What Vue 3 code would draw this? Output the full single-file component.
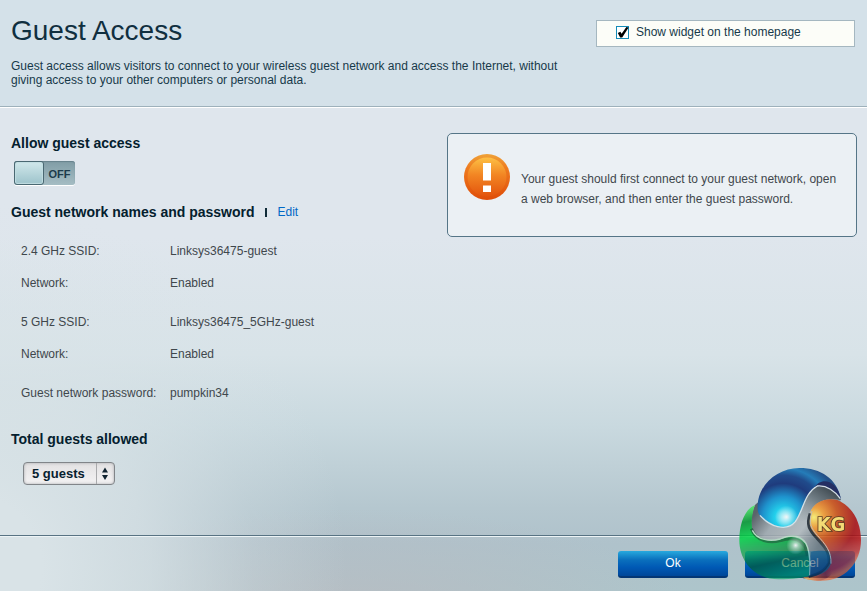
<script setup>
import { ref } from 'vue';

const showWidget = ref(true);
const guestAccess = ref(false);
const guests = ref(5);

const networks = [
  [
    { label: '2.4 GHz SSID:', value: 'Linksys36475-guest' },
    { label: 'Network:', value: 'Enabled' }
  ],
  [
    { label: '5 GHz SSID:', value: 'Linksys36475_5GHz-guest' },
    { label: 'Network:', value: 'Enabled' }
  ],
  [
    { label: 'Guest network password:', value: 'pumpkin34' }
  ]
];
</script>

<template>
  <div class="page">
    <header class="header">
      <div class="intro">
        <h1>Guest Access</h1>
        <p>Guest access allows visitors to connect to your wireless guest network and access the Internet, without giving access to your other computers or personal data.</p>
      </div>
      <label class="widget-box">
        <span class="check">
          <input type="checkbox" v-model="showWidget" />
          <svg v-if="showWidget" viewBox="0 0 13 13"><path d="M1.8 7 4.4 5.8 5.6 7.8 10.4 1 12.6 1.4 6.2 11.4 4.2 11.4Z" /></svg>
        </span>
        <span>Show widget on the homepage</span>
      </label>
    </header>

    <main class="main">
      <section class="settings">
        <h2 id="allow-title">Allow guest access</h2>
        <button type="button" class="toggle" :class="{ on: guestAccess }" role="switch" :aria-checked="guestAccess" aria-labelledby="allow-title" @click="guestAccess = !guestAccess">
          <span class="knob"></span>
          <span class="state">{{ guestAccess ? 'ON' : 'OFF' }}</span>
        </button>

        <div class="title-row">
          <h2>Guest network names and password</h2>
          <span class="divider"></span>
          <a href="#">Edit</a>
        </div>
        <div class="networks">
          <dl v-for="(rows, i) in networks" :key="i">
            <template v-for="row in rows" :key="row.label">
              <dt>{{ row.label }}</dt>
              <dd>{{ row.value }}</dd>
            </template>
          </dl>
        </div>

        <h2><label for="guests">Total guests allowed</label></h2>
        <div class="select-box">
          <select id="guests" v-model="guests">
            <option v-for="n in 10" :key="n" :value="n * 5">{{ n * 5 }} guests</option>
          </select>
          <svg viewBox="0 0 17 21"><path d="M8 4.5 11 9.5H5ZM5 12H11L8 17Z" /></svg>
        </div>
      </section>

      <aside class="notice">
        <svg viewBox="0 0 46 46">
          <defs>
            <linearGradient id="rim" x1="0" y1="0" x2="0" y2="1">
              <stop offset="0" stop-color="#efa238" />
              <stop offset="0.3" stop-color="#ee7b20" />
              <stop offset="1" stop-color="#df4d08" />
            </linearGradient>
            <linearGradient id="disc" x1="0" y1="0" x2="0" y2="1">
              <stop offset="0" stop-color="#fdc044" />
              <stop offset="0.45" stop-color="#f28523" />
              <stop offset="1" stop-color="#e3540d" />
            </linearGradient>
          </defs>
          <circle cx="23" cy="23" r="23" fill="url(#rim)" />
          <circle cx="23" cy="23" r="19.5" fill="url(#disc)" />
          <path d="M19 9H27V26.5H19ZM19 31.5H27V38H19Z" fill="#fff" />
        </svg>
        <p>Your guest should first connect to your guest network, open a web browser, and then enter the guest password.</p>
      </aside>
    </main>

    <footer class="footer">
      <button type="button" class="btn">Ok</button>
      <button type="button" class="btn">Cancel</button>
      <svg class="logo" viewBox="0 0 411 393">
        <defs>
          <radialGradient id="blue" gradientUnits="userSpaceOnUse" cx="160" cy="172" r="175">
            <stop offset="0" stop-color="#6df0ff" />
            <stop offset="0.15" stop-color="#0ad2f2" />
            <stop offset="0.36" stop-color="#0488cc" />
            <stop offset="0.58" stop-color="#04236f" />
            <stop offset="0.72" stop-color="#06357f" />
            <stop offset="0.84" stop-color="#0b6fb4" />
            <stop offset="1" stop-color="#0a3a7a" />
          </radialGradient>
          <linearGradient id="green" gradientUnits="userSpaceOnUse" x1="60" y1="130" x2="110" y2="360">
            <stop offset="0" stop-color="#5cff70" />
            <stop offset="0.22" stop-color="#00952f" />
            <stop offset="0.42" stop-color="#00d445" />
            <stop offset="0.62" stop-color="#009a38" />
            <stop offset="0.8" stop-color="#005a22" />
            <stop offset="1" stop-color="#00a060" />
          </linearGradient>
          <radialGradient id="red" gradientUnits="userSpaceOnUse" cx="252" cy="172" r="185">
            <stop offset="0" stop-color="#fff36a" />
            <stop offset="0.16" stop-color="#f59a2c" />
            <stop offset="0.38" stop-color="#cc4c10" />
            <stop offset="0.68" stop-color="#a80c10" />
            <stop offset="0.9" stop-color="#c01c1c" />
            <stop offset="1" stop-color="#f0602a" />
          </radialGradient>
          <linearGradient id="steel" gradientUnits="userSpaceOnUse" x1="70" y1="170" x2="290" y2="340">
            <stop offset="0" stop-color="#4b5359" />
            <stop offset="0.22" stop-color="#9fa8ae" />
            <stop offset="0.5" stop-color="#b3babe" />
            <stop offset="0.75" stop-color="#5d6a74" />
            <stop offset="1" stop-color="#304452" />
          </linearGradient>
          <linearGradient id="arm" gradientUnits="userSpaceOnUse" x1="290" y1="80" x2="215" y2="190">
            <stop offset="0" stop-color="#2d363d" />
            <stop offset="0.4" stop-color="#66727a" />
            <stop offset="1" stop-color="#8e999f" stop-opacity="0" />
          </linearGradient>
          <linearGradient id="ember" gradientUnits="userSpaceOnUse" x1="225" y1="355" x2="305" y2="330">
            <stop offset="0" stop-color="#ffb02e" />
            <stop offset="0.35" stop-color="#ef5a18" />
            <stop offset="0.75" stop-color="#8c1218" stop-opacity="0.7" />
            <stop offset="1" stop-color="#8c1218" stop-opacity="0" />
          </linearGradient>
          <radialGradient id="glow">
            <stop offset="0" stop-color="#fff" />
            <stop offset="0.3" stop-color="#fff" stop-opacity="0.6" />
            <stop offset="1" stop-color="#fff" stop-opacity="0" />
          </radialGradient>
        </defs>
        <path d="M75 135C100 110 215 60 270 74C312 82 332 110 336 140C330 220 315 270 303 325C280 355 250 350 222 356C170 330 75 265 64 215C62 180 65 155 75 135Z" fill="url(#steel)" />
        <path d="M262 77C300 76 325 98 333 120C290 112 245 122 232 178L196 190C222 150 224 98 262 77Z" fill="url(#arm)" />
        <path d="M83 150C78 78 140 24 208 24C272 24 322 56 333 118C314 91 288 75 262 77C228 91 224 140 202 176C190 200 165 208 140 200C104 187 86 172 83 150Z" fill="url(#blue)" />
        <path d="M254 82C270 52 322 56 333 118C314 91 288 75 254 82Z" fill="#0b1450" />
        <path d="M90 166C118 198 168 218 196 185C222 148 222 100 262 78C290 75 316 94 331 116" fill="none" stroke="#dbe5ea" stroke-width="4" />
        <path d="M240 165C242 133 280 110 322 120C370 140 393 190 393 240C393 312 340 365 270 362C248 362 225 358 220 352C268 350 296 338 303 310C302 272 277 250 255 225C240 207 235 190 240 165Z" fill="url(#red)" />
        <path d="M220 352C268 350 296 338 303 308L318 312C312 345 290 362 262 362C244 362 226 358 220 352Z" fill="url(#ember)" />
        <path d="M240 160C228 195 238 209 256 230C281 257 298 272 297 308C280 340 255 344 236 350" fill="none" stroke="#1d252d" stroke-width="8" />
        <path d="M246 153C234 190 245 207 262 226C286 252 305 275 303 311" fill="none" stroke="#c5bdb0" stroke-width="3" />
        <path d="M75 135C45 147 28 190 28 240C28 310 80 358 145 358C190 358 220 352 238 347C244 310 241 270 225 250C207 228 180 226 150 240C115 248 77 233 68 213C62 190 66 160 75 135Z" fill="url(#green)" />
        <path d="M64 206C80 246 120 250 152 242C184 232 208 234 226 262L232 288" fill="none" stroke="#003b1a" stroke-width="9" opacity="0.6" />
        <path d="M67 211C82 241 120 245 150 237C184 222 211 225 228 250C242 278 241 314 239 346" fill="none" stroke="#b4dcc0" stroke-width="4" />
        <path d="M243 276C275 268 292 270 298 290C297 318 282 338 240 347Z" fill="#06396e" opacity="0.55" />
        <circle cx="169" cy="171" r="34" fill="url(#glow)" />
        <circle cx="197" cy="256" r="28" fill="url(#glow)" />
        <text x="260" y="213" class="initials">KG</text>
      </svg>
    </footer>
  </div>
</template>

<style>
body {
  margin: 0;
}
</style>

<style scoped>
.page {
  min-height: 100vh;
  display: flex;
  flex-direction: column;
  font-family: "Liberation Sans", Arial, Helvetica, sans-serif;
  font-size: 12px;
  color: #3f474c;
  background:
    radial-gradient(ellipse 44% 62% at -4% 96%, #d9e3e7 20%, rgba(217, 227, 231, 0.75) 48%, rgba(217, 227, 231, 0.25) 76%, rgba(217, 227, 231, 0) 100%),
    radial-gradient(ellipse 40% 18% at 40% 104%, rgba(186, 186, 192, 0.8), rgba(186, 186, 192, 0) 100%),
    linear-gradient(180deg, #dfe6ed 0%, #dfe6ed 40%, #d8e3e8 60%, #c9d9df 72%, #b5c7cf 86%, #afc2cb 92%, #adc5cb 100%);
}
h1,
h2,
p,
dl,
dd {
  margin: 0;
}
.header {
  display: flex;
  justify-content: space-between;
  align-items: flex-start;
  gap: 20px;
  padding: 13px 12px 19px 11px;
  background-color: #d4e1e9;
  border-bottom: 1px solid #9eb1bb;
  box-shadow: 0 1px #fff;
  color: #17394a;
}
.intro {
  max-width: 565px;
}
h1 {
  font-size: 28px;
  line-height: 36px;
  font-weight: normal;
  color: #102f3f;
}
.intro p {
  margin-top: 10px;
  line-height: 14px;
}
.widget-box {
  flex: 0 0 259px;
  box-sizing: border-box;
  display: flex;
  gap: 7px;
  margin-top: 7px;
  padding: 4px 19px 7px;
  line-height: 14px;
  background-color: #fcfdf8;
  border: 1px solid #a5b7c0;
}
.check {
  position: relative;
  height: 13px;
  margin-top: 1px;
}
.check input {
  appearance: none;
  display: block;
  box-sizing: border-box;
  width: 13px;
  height: 13px;
  margin: 0;
  background-color: #fff;
  border: 1px solid #148bb8;
}
.check svg {
  position: absolute;
  inset: 0;
  width: 13px;
  height: 13px;
  pointer-events: none;
}
.main {
  flex: 1;
  display: flex;
  justify-content: space-between;
  align-items: flex-start;
  gap: 20px;
  padding: 26px 10px 24px 11px;
}
h2 {
  font-size: 14px;
  line-height: 20px;
  color: #04202e;
}
.toggle {
  display: flex;
  width: 61px;
  height: 24px;
  margin: 8px 0 0 3px;
  padding: 0;
  border: 0;
  border-radius: 3px;
  background: linear-gradient(#809ca5, #a5bdc4);
  box-shadow: 0 1px #fff, inset 0 1px 1px #66828c;
  font: bold 11px/26px "Liberation Sans", Arial, sans-serif;
  color: #1d3b4b;
}
.toggle.on {
  flex-direction: row-reverse;
}
.knob {
  box-sizing: border-box;
  width: 30px;
  height: 24px;
  border: 1px solid #4a6872;
  border-radius: 3px;
  background: linear-gradient(#d1e8eb, #9dc3cb);
  box-shadow: inset 0 0 1px 1px #c1dde1;
}
.state {
  flex: 1;
  text-align: center;
}
.title-row {
  display: flex;
  align-items: center;
  margin-top: 17px;
}
.divider {
  width: 2px;
  height: 9px;
  margin: 0 11px 0 10px;
  background-color: #102b38;
}
.title-row a {
  color: #0068c6;
  text-decoration: none;
}
.networks {
  display: grid;
  gap: 23px;
  margin: 21px 0 28px 10px;
}
.networks dl {
  display: grid;
  grid-template-columns: 149px auto;
  row-gap: 16px;
  line-height: 16px;
}
.select-box {
  position: relative;
  width: 92px;
  margin: 13px 0 0 12px;
}
.select-box select {
  appearance: none;
  display: block;
  box-sizing: border-box;
  width: 100%;
  height: 23px;
  padding: 0 20px 1px 8px;
  border: 1px solid #818589;
  border-radius: 4px;
  background: linear-gradient(#e3e2e3, #f3f2f3);
  box-shadow: inset 0 0 3px #a7a9ac;
  font: bold 13px "Liberation Sans", Arial, sans-serif;
  color: #07212f;
}
.select-box svg {
  position: absolute;
  top: 1px;
  right: 1px;
  width: 17px;
  height: 21px;
  border-left: 1px solid #a9aaac;
  fill: #102431;
  pointer-events: none;
}
.notice {
  flex: 0 1 410px;
  box-sizing: border-box;
  display: flex;
  gap: 11px;
  padding: 20px 16px 27px;
  border: 1px solid #557587;
  border-radius: 5px;
  background-color: #ebf0f4;
}
.notice svg {
  flex: none;
  width: 46px;
  height: 46px;
}
.notice p {
  margin-top: 15px;
  line-height: 20px;
}
.footer {
  position: relative;
  display: flex;
  justify-content: flex-end;
  gap: 17px;
  padding: 15px 12px 13px;
  border-top: 1px solid #587383;
  box-shadow: inset 0 1px #edf4f6;
}
.btn {
  width: 110px;
  height: 27px;
  padding: 0 0 1px;
  border: 0;
  border-bottom: 2px solid #043674;
  border-radius: 3px;
  background: linear-gradient(#27a9de, #0a70bd 35%, #0059b5 65%, #004799);
  font: 12px "Liberation Sans", Arial, sans-serif;
  color: #fff;
}
/* see-through mark, fainter where it covers the button */
.logo {
  position: absolute;
  right: 0;
  bottom: 0;
  width: 137px;
  height: 131px;
  opacity: 0.85;
  mask-image: linear-gradient(#000 60%, rgba(0, 0, 0, 0.72) 74%);
  pointer-events: none;
}
.initials {
  font: bold 60px "DejaVu Sans Condensed", "DejaVu Sans", sans-serif;
  fill: #ffe066;
  stroke: #4a2408;
  stroke-width: 5px;
  paint-order: stroke;
}
</style>
